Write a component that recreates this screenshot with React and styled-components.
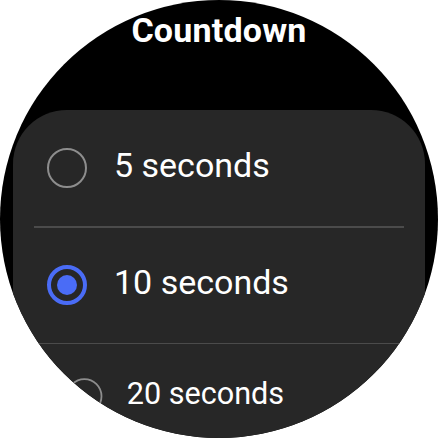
import React from "react";
import styled, { createGlobalStyle } from "styled-components";

const Global = createGlobalStyle`
  html, body { margin: 0; padding: 0; background: #ffffff; }
  #root { width: 438px; height: 438px; }
`;

const Screen = styled.div`
  width: 438px;
  height: 438px;
  border-radius: 50%;
  overflow: hidden;
  background: #000;
  display: flex;
  flex-direction: column;
  align-items: stretch;
  font-family: Roboto, "Noto Sans", sans-serif;
  color: #fff;
`;

const Title = styled.h1`
  margin: 0;
  padding-top: 10px;
  height: 110px;
  flex: none;
  box-sizing: border-box;
  text-align: center;
  font-size: 34px;
  line-height: 40px;
  font-weight: 700;
  letter-spacing: 0.2px;
`;

const Card = styled.div`
  margin: 0 13px;
  flex: none;
  background: #272727;
  border-radius: 54px 54px 0 0;
  display: flex;
  flex-direction: column;
`;

const Row = styled.div`
  height: ${(p) => p.$h}px;
  flex: none;
  display: flex;
  align-items: center;
  gap: 27px;
  padding-left: 34px;
  box-sizing: border-box;
  transform: scale(${(p) => p.$scale});
  transform-origin: 228px 0;
`;

const Divider = styled.div`
  height: 1.5px;
  margin: 0 21px;
  background: #4b4b4b;
  flex: none;
`;

const Radio = styled.div`
  width: 40px;
  height: 40px;
  box-sizing: border-box;
  border-radius: 50%;
  border: ${(p) => (p.$on ? "4px solid #4a6cf6" : "2.5px solid #8d8d8d")};
  display: flex;
  align-items: center;
  justify-content: center;
  flex: none;
`;

const Dot = styled.div`
  width: 20px;
  height: 20px;
  border-radius: 50%;
  background: #4a6cf6;
`;

const Label = styled.span`
  font-size: 34px;
  line-height: 40px;
  font-weight: 400;
  color: #fff;
  margin-top: -6px;
`;

const options = [
  { label: "5 seconds", on: false, h: 116, scale: 1 },
  { label: "10 seconds", on: true, h: 115, scale: 1 },
  { label: "20 seconds", on: false, h: 115, scale: 0.9 },
];

export default function App() {
  return (
    <>
      <Global />
      <Screen>
        <Title>Countdown</Title>
        <Card>
          {options.map((o, i) => (
            <React.Fragment key={o.label}>
              {i > 0 && <Divider />}
              <Row $h={o.h} $scale={o.scale}>
                <Radio $on={o.on}>{o.on && <Dot />}</Radio>
                <Label>{o.label}</Label>
              </Row>
            </React.Fragment>
          ))}
        </Card>
      </Screen>
    </>
  );
}
